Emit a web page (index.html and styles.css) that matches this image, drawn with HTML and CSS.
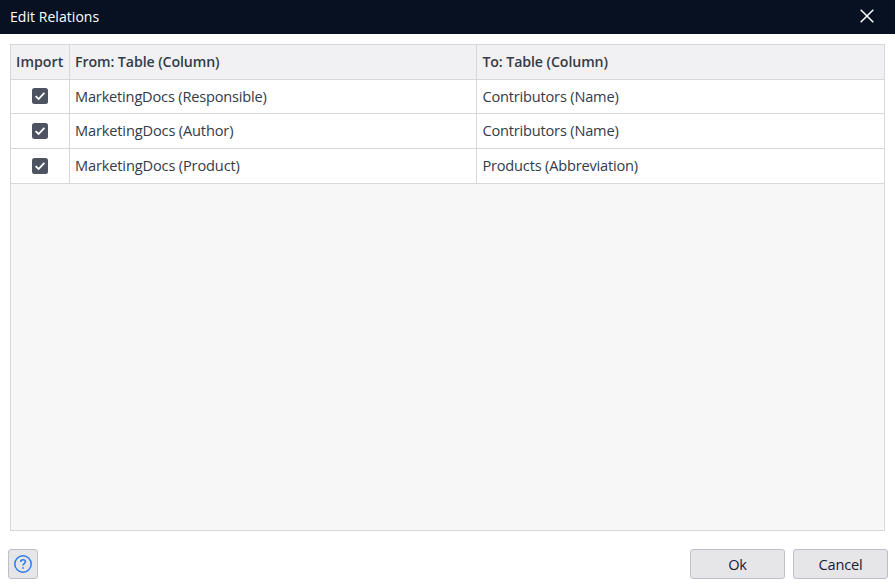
FILE: index.html
```html
<!DOCTYPE html>
<html lang="en">
<head>
<meta charset="utf-8">
<title>Edit Relations</title>
<link rel="stylesheet" href="styles.css">
</head>
<body>
<div class="dialog">
  <header class="titlebar">
    <h1 class="title">Edit Relations</h1>
    <button class="close" aria-label="Close"><svg width="14" height="14" viewBox="0 0 14 14"><path d="M.7.7l12.6 12.6M13.3.7L.7 13.3"/></svg></button>
  </header>
  <main class="grid">
    <div class="row head">
      <div class="cell import">Import</div>
      <div class="cell">From: Table (Column)</div>
      <div class="cell">To: Table (Column)</div>
    </div>
    <div class="row first">
      <div class="cell check"><svg class="box" viewBox="0 0 16 16"><rect width="16" height="16" rx="2.5"/><path d="M3.6 8.2l3 2.8 5.8-6.2"/></svg></div>
      <div class="cell responsible">MarketingDocs (Responsible)</div>
      <div class="cell">Contributors (Name)</div>
    </div>
    <div class="row">
      <div class="cell check"><svg class="box" viewBox="0 0 16 16"><rect width="16" height="16" rx="2.5"/><path d="M3.6 8.2l3 2.8 5.8-6.2"/></svg></div>
      <div class="cell">MarketingDocs (Author)</div>
      <div class="cell">Contributors (Name)</div>
    </div>
    <div class="row">
      <div class="cell check"><svg class="box" viewBox="0 0 16 16"><rect width="16" height="16" rx="2.5"/><path d="M3.6 8.2l3 2.8 5.8-6.2"/></svg></div>
      <div class="cell">MarketingDocs (Product)</div>
      <div class="cell">Products (Abbreviation)</div>
    </div>
  </main>
  <footer class="footer">
    <button class="btn help" aria-label="Help"><svg width="18" height="18" viewBox="0 0 18 18"><circle cx="9" cy="9" r="8.2"/><path d="M6.6 7.1c0-1.5 1-2.4 2.4-2.4s2.4.9 2.4 2.1c0 1.7-2.4 1.9-2.4 3.7"/><circle class="dot" cx="9" cy="12.9" r=".95"/></svg></button>
    <button class="btn action">Ok</button>
    <button class="btn action">Cancel</button>
  </footer>
</div>
</body>
</html>
```
FILE: styles.css
```css
* { box-sizing: border-box; }
body {
  margin: 0;
  background: #fff;
  color: #333b49;
  font: 14.6px/20px "Open Sans", "Noto Sans", sans-serif;
}
button { font: inherit; padding: 0; }
svg { display: block; }
.dialog { height: 586px; display: flex; flex-direction: column; overflow: hidden; }
.titlebar {
  height: 34px;
  flex: none;
  display: flex;
  align-items: center;
  justify-content: space-between;
  padding: 0 21px 2px 10px;
  background: #081122;
  color: #fff;
}
.title { margin: 0; padding-top: 1px; font-size: 14px; font-weight: 400; letter-spacing: .05px; }
.close { border: 0; background: none; }
.close path { fill: none; stroke: #fff; stroke-width: 1.5; }
.grid {
  margin: 10px 10px 0;
  height: 487px;
  flex: none;
  border: 1px solid #d6d7da;
  background: #f7f7f7;
}
.row {
  display: grid;
  grid-template-columns: 59px 407px 1fr;
  height: 35px;
  background: #fff;
}
.row.first { height: 34px; }
.cell {
  display: flex;
  align-items: center;
  padding: 0 0 2px 5px;
  border-right: 1px solid #d6d7da;
  border-bottom: 1px solid #d6d7da;
  white-space: nowrap;
  letter-spacing: -.15px;
}
.row.head { background: #f1f1f3; font-size: 14.2px; font-weight: 600; }
.head .cell { padding-bottom: 0; letter-spacing: -.1px; }
.head .cell.import { letter-spacing: .05px; }
.cell.responsible { letter-spacing: -.19px; }
.cell:last-child { border-right: 0; padding-left: 5.4px; letter-spacing: -.19px; }
.head .cell:last-child { letter-spacing: -.1px; }
.cell.check { justify-content: center; padding: 0; }
.first .cell.check { padding-bottom: 1px; }
.box { width: 16px; height: 16px; }
.box rect { fill: #4e5361; }
.box path { fill: none; stroke: #fff; stroke-width: 1.8; }
.footer { display: flex; gap: 8px; padding: 18px 7px 0 8px; }
.btn {
  height: 30px;
  border: 1px solid #bfc0c6;
  border-radius: 3px;
  background: #e6e6e9;
  color: #172033;
}
.help {
  width: 30px;
  margin-right: auto;
  display: flex;
  align-items: center;
  justify-content: center;
}
.help circle, .help path { fill: none; stroke: #2f7bea; stroke-width: 1.5; }
.help .dot { fill: #2f7bea; stroke: none; }
.action { width: 95px; letter-spacing: -.15px; }
```
